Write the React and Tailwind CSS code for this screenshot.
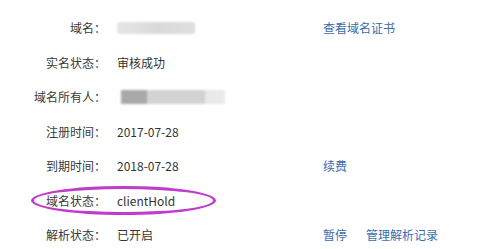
import React from "react";

const font = { fontFamily: '"Noto Sans CJK SC", "Noto Sans", sans-serif' };

function Row({ label, value, links }) {
  return (
    <div className="flex h-[34.5px] items-center">
      <div className="w-[106px] shrink-0 text-right text-[#3a3a3a]">{label}</div>
      <div className="ml-[11px] w-[206px] shrink-0 text-[#333333]">{value}</div>
      <div className="flex gap-[19px] text-[#3b6cab]">
        {links && links.map((l) => <span key={l}>{l}</span>)}
      </div>
    </div>
  );
}

export default function App() {
  return (
    <div
      className="relative h-[249px] w-[500px] overflow-hidden bg-white pt-[11px] text-[12px] leading-none"
      style={font}
    >
      <Row
        label="域名："
        value={
          <div className="h-[12px] w-[78px] rounded-[2px] bg-gradient-to-r from-[#e6e6e6] via-[#dadada] to-[#dedede] blur-[0.8px]" />
        }
        links={["查看域名证书"]}
      />
      <Row label="实名状态：" value="审核成功" />
      <Row
        label="域名所有人："
        value={
          <div className="ml-[4px] flex h-[14px] w-[104px] blur-[0.8px]">
            <div className="w-[26px] bg-[#a9a9a9]" />
            <div className="w-[58px] bg-[#d3d3d3]" />
            <div className="w-[20px] bg-[#e9e9e9]" />
          </div>
        }
      />
      <Row label="注册时间：" value="2017-07-28" />
      <Row label="到期时间：" value="2018-07-28" links={["续费"]} />
      <Row label="域名状态：" value="clientHold" />
      <Row label="解析状态：" value="已开启" links={["暂停", "管理解析记录"]} />
      <div className="pointer-events-none absolute left-[31px] top-[186px] h-[29px] w-[185px] rounded-[50%] border-[3px] border-[#c03ccc] blur-[0.4px]" />
    </div>
  );
}
